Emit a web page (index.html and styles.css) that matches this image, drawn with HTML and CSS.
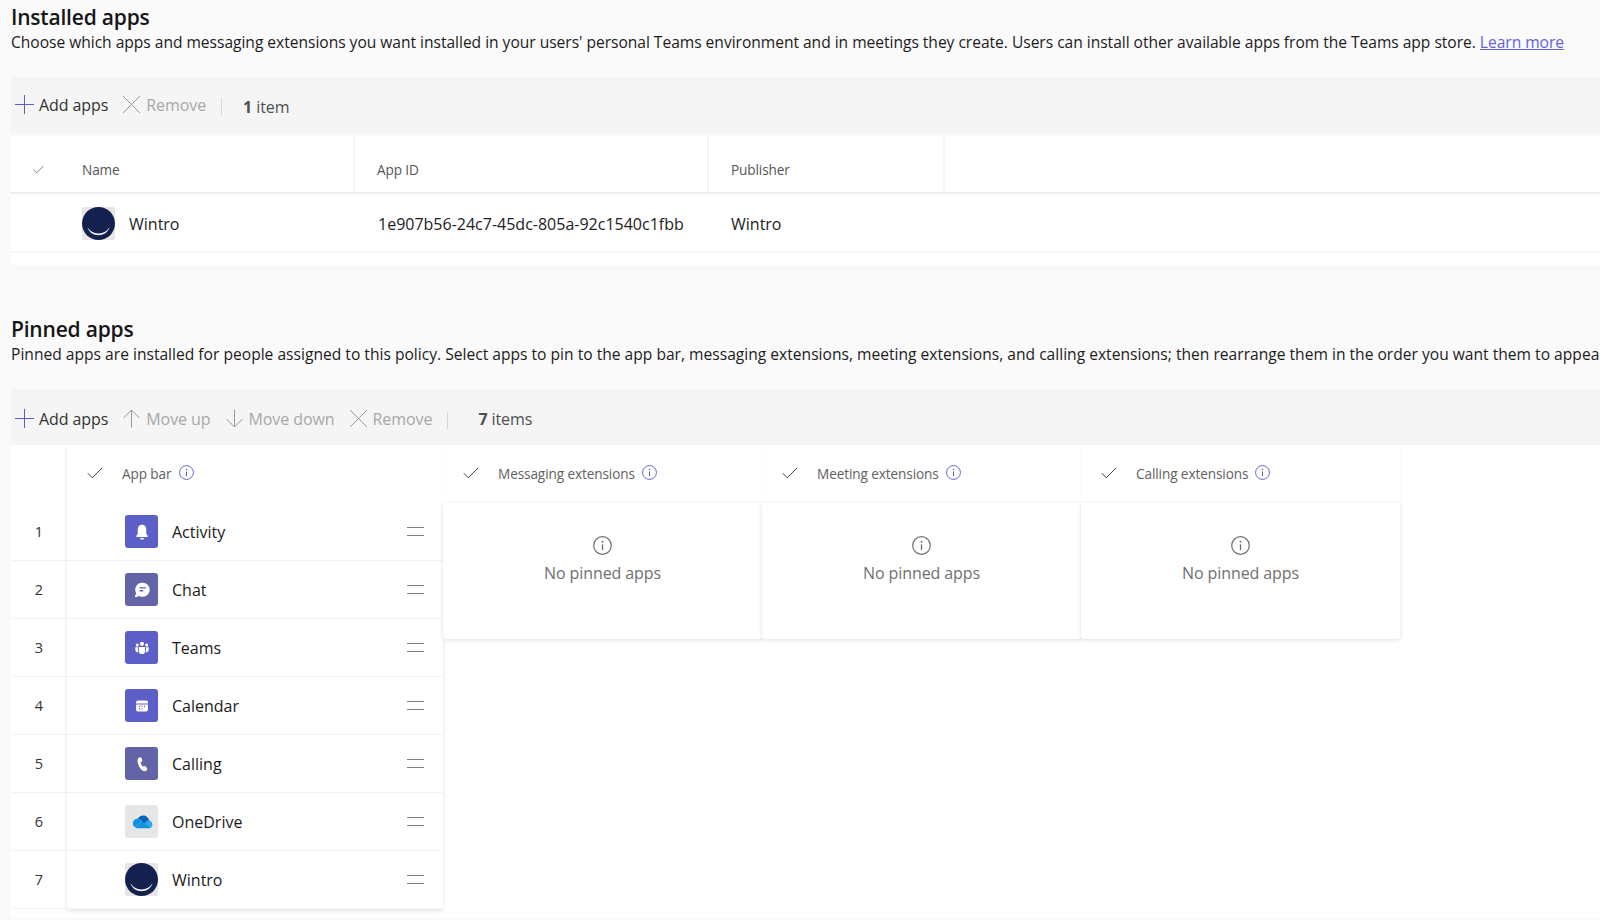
FILE: index.html
```html
<!DOCTYPE html>
<html lang="en">
<head>
<meta charset="utf-8">
<title>App setup policy</title>
<link rel="stylesheet" href="styles.css">
</head>
<body>
<svg class="defs" width="0" height="0" aria-hidden="true">
  <symbol id="i-plus" viewBox="0 0 19 19"><path d="M9.5 0V19M0 9.5H19" fill="none" stroke="#5b5fc7" stroke-width="1"/></symbol>
  <symbol id="i-x" viewBox="0 0 19 19"><path d="M1 1L18 18M18 1L1 18" fill="none" stroke="#9a9a9a" stroke-width="1"/></symbol>
  <symbol id="i-up" viewBox="0 0 19 19"><path d="M9.5 18.5V1M1.5 9L9.5 1L17.5 9" fill="none" stroke="#9a9a9a" stroke-width="1"/></symbol>
  <symbol id="i-down" viewBox="0 0 19 19"><path d="M9.5 .5V18M1.5 10L9.5 18L17.5 10" fill="none" stroke="#9a9a9a" stroke-width="1"/></symbol>
  <symbol id="i-check" viewBox="0 0 16 12"><path d="M.8 6.2L5.2 10.8L15.2 .8" fill="none" stroke="#444" stroke-width="1"/></symbol>
  <symbol id="i-info" viewBox="0 0 16 16"><circle cx="8" cy="8" r="7.4" fill="none" stroke="currentColor" stroke-width="1"/><circle cx="8" cy="4.9" r=".8" fill="currentColor"/><path d="M8 7V11.8" stroke="currentColor" stroke-width="1.1" fill="none"/></symbol>
  <symbol id="i-wintro" viewBox="0 0 33 33"><rect width="33" height="33" rx="2" fill="#e6e6e6"/><circle cx="16.5" cy="16.5" r="16.5" fill="#14214f"/><path d="M5.5 20C8 31 25 31 27.5 20C23 28.5 10 28.5 5.5 20Z" fill="#eeeef4"/></symbol>
</svg>

<main class="page">
  <section class="block">
    <h2 class="title">Installed apps</h2>
    <p class="desc">Choose which apps and messaging extensions you want installed in your users' personal Teams environment and in meetings they create. Users can install other available apps from the Teams app store. <a class="link" href="#">Learn more</a></p>
    <div class="toolbar toolbar-installed">
      <span class="tool tool-add"><svg class="ticon"><use href="#i-plus"/></svg>Add apps</span>
      <span class="tool tool-off"><svg class="ticon"><use href="#i-x"/></svg>Remove</span>
      <span class="sep"></span>
      <span class="count"><b>1</b> item</span>
    </div>
    <div class="table">
      <div class="thead">
        <div class="th th-name"><svg class="tcheck"><use href="#i-check"/></svg><span>Name</span></div>
        <div class="th th-id"><span>App ID</span></div>
        <div class="th th-pub"><span>Publisher</span></div>
      </div>
      <div class="trow">
        <div class="td td-name"><svg class="appicon"><use href="#i-wintro"/></svg><span>Wintro</span></div>
        <div class="td td-id">1e907b56-24c7-45dc-805a-92c1540c1fbb</div>
        <div class="td td-pub">Wintro</div>
      </div>
      <div class="tfoot"></div>
    </div>
  </section>

  <section class="block block-pinned">
    <h2 class="title">Pinned apps</h2>
    <p class="desc desc-pinned">Pinned apps are installed for people assigned to this policy. Select apps to pin to the app bar, messaging extensions, meeting extensions, and calling extensions; then rearrange them in the order you want them to appear in Teams.</p>
    <div class="toolbar toolbar-pinned">
      <span class="tool tool-add"><svg class="ticon"><use href="#i-plus"/></svg>Add apps</span>
      <span class="tool tool-off"><svg class="ticon"><use href="#i-up"/></svg>Move up</span>
      <span class="tool tool-off"><svg class="ticon"><use href="#i-down"/></svg>Move down</span>
      <span class="tool tool-off"><svg class="ticon"><use href="#i-x"/></svg>Remove</span>
      <span class="sep"></span>
      <span class="count count-wide"><b>7</b> items</span>
    </div>
    <div class="board">
      <div class="nums">
        <div class="num-head"></div>
        <div class="num">1</div><div class="num">2</div><div class="num">3</div><div class="num">4</div><div class="num">5</div><div class="num">6</div><div class="num">7</div>
      </div>
      <div class="appbar">
        <div class="colhead"><svg class="ccheck"><use href="#i-check"/></svg><span class="coltext">App bar</span><svg class="cinfo"><use href="#i-info"/></svg></div>
        <div class="app"><span class="tile tile-indigo"><svg viewBox="0 0 16 16"><path d="M8 2.2C5.6 2.2 4.6 4 4.6 6V9.3L3.4 11.2C3.2 11.6 3.4 11.9 3.8 11.9H12.2C12.6 11.9 12.8 11.6 12.6 11.2L11.4 9.3V6C11.4 4 10.4 2.2 8 2.2Z" fill="#fff"/><rect x="6.5" y="12.7" width="3" height="1.3" rx=".6" fill="#fff"/></svg></span><span class="appname">Activity</span><span class="grip"></span></div>
        <div class="app"><span class="tile tile-slate"><svg viewBox="0 0 16 16"><path d="M8.6 2.2A5.6 5.6 0 0 1 8.6 13.4C7.6 13.4 6.7 13.2 5.9 12.7L3 13.7C2.6 13.8 2.3 13.5 2.4 13.1L3.3 10.5A5.6 5.6 0 0 1 8.6 2.2Z" fill="#fff"/><path d="M6 6.3H11M6 8.6H9" stroke="#6264a7" stroke-width="1.1" fill="none"/></svg></span><span class="appname">Chat</span><span class="grip"></span></div>
        <div class="app"><span class="tile tile-indigo"><svg viewBox="-1 -1 18 18" fill="#fff"><circle cx="8" cy="4.2" r="1.9"/><circle cx="3.8" cy="5.4" r="1.4"/><circle cx="12.2" cy="5.4" r="1.4"/><path d="M5.2 7.2H10.8V10.6A2.8 2.8 0 0 1 5.2 10.6Z"/><path d="M2 7.4H4.4V10.8L4.8 12C3.2 12 2 11 2 9.6Z"/><path d="M14 7.4H11.6V10.8L11.2 12C12.8 12 14 11 14 9.6Z"/></svg></span><span class="appname">Teams</span><span class="grip"></span></div>
        <div class="app"><span class="tile tile-indigo"><svg viewBox="-2 -2 20 20"><path d="M4 2.4H12A2 2 0 0 1 14 4.4V5.6H2V4.4A2 2 0 0 1 4 2.4Z" fill="#fff"/><path d="M2 6.5H14V11.6A2 2 0 0 1 12 13.6H4A2 2 0 0 1 2 11.6Z" fill="#fff"/><path d="M5 8.3H6.1M7.5 8.3H8.6M10 8.3H11.1M5 10.8H6.1M7.5 10.8H8.6" stroke="#5b5fc7" stroke-width="1.2" fill="none"/></svg></span><span class="appname">Calendar</span><span class="grip"></span></div>
        <div class="app"><span class="tile tile-slate"><svg viewBox="-1 -1 18 18"><path d="M5.1 2.3L6.2 2C6.8 1.8 7.3 2.1 7.5 2.6L8.2 4.4C8.4 4.9 8.2 5.4 7.9 5.7L6.8 6.6C7 7.9 7.8 9.3 8.8 10.2L10.2 9.8C10.7 9.6 11.2 9.8 11.5 10.2L12.6 11.8C12.9 12.3 12.8 12.9 12.4 13.3L11.6 14C11 14.5 10.2 14.6 9.5 14.4C6.6 13.2 3.9 8.6 4 5C4 3.8 4.4 2.7 5.1 2.3Z" fill="#fff"/></svg></span><span class="appname">Calling</span><span class="grip"></span></div>
        <div class="app"><span class="tile tile-gray"><svg viewBox="0 0 20 20"><path d="M10.8 5C9 5 7.5 6 6.7 7.5C8 7.6 9.1 8.4 9.8 9.4L12 11.5L15.5 8.9C15.1 6.6 13.1 5 10.8 5Z" fill="#0364b8"/><path d="M6.7 7.5C4.6 7.5 3 9.1 3 11.1C3 12.3 3.6 13.4 4.6 14L9.8 9.4C9.1 8.2 8 7.5 6.7 7.5Z" fill="#0f8fe6"/><path d="M4.6 14C5.2 14.5 6 14.8 6.8 14.8H15.5C16.1 14.8 16.6 14.5 17 14.2L9.8 9.4Z" fill="#1490df"/><path d="M15.5 8.9C14.6 8.7 13.7 9 13 9.6L12 11.5L17 14.2C17.6 13.6 18 12.9 18 12C18 10.5 17 9.2 15.5 8.9Z" fill="#28a8ea"/></svg></span><span class="appname">OneDrive</span><span class="grip"></span></div>
        <div class="app"><svg class="appicon"><use href="#i-wintro"/></svg><span class="appname">Wintro</span><span class="grip"></span></div>
      </div>
      <div class="ext">
        <div class="colhead colhead-ext"><svg class="ccheck"><use href="#i-check"/></svg><span class="coltext">Messaging extensions</span><svg class="cinfo"><use href="#i-info"/></svg></div>
        <div class="empty"><svg class="einfo"><use href="#i-info"/></svg><span>No pinned apps</span></div>
      </div>
      <div class="ext">
        <div class="colhead colhead-ext"><svg class="ccheck"><use href="#i-check"/></svg><span class="coltext">Meeting extensions</span><svg class="cinfo"><use href="#i-info"/></svg></div>
        <div class="empty"><svg class="einfo"><use href="#i-info"/></svg><span>No pinned apps</span></div>
      </div>
      <div class="ext">
        <div class="colhead colhead-ext"><svg class="ccheck"><use href="#i-check"/></svg><span class="coltext">Calling extensions</span><svg class="cinfo"><use href="#i-info"/></svg></div>
        <div class="empty"><svg class="einfo"><use href="#i-info"/></svg><span>No pinned apps</span></div>
      </div>
    </div>
  </section>
</main>
</body>
</html>
```
FILE: styles.css
```css
* { box-sizing: border-box; }
html, body { margin: 0; height: 100%; overflow: hidden; }
body { background: #fafafa; color: #111; font-family: "Open Sans", "Liberation Sans", sans-serif; }
.defs { position: absolute; }
.page { padding: 5px 0 0 11px; width: 1600px; }
.title { margin: 0; font-size: 21px; line-height: 24px; font-weight: 600; letter-spacing: -.2px; color: #161616; }
.desc { margin: 2px 0 0; font-size: 15.6px; line-height: 22px; white-space: nowrap; overflow: hidden; letter-spacing: -.03px; color: #1c1c1c; }
.desc-pinned { letter-spacing: .005px; }
.link { color: #6264d8; }
.block-pinned { margin-top: 52px; }

.toolbar { display: flex; align-items: center; height: 57px; margin-top: 24px; background: #f5f5f5; padding-left: 4px; font-size: 16px; letter-spacing: -.08px; }
.toolbar-installed { padding-bottom: 2px; }
.toolbar-pinned { height: 56px; padding-top: 3px; }
.tool { display: flex; align-items: center; margin-right: 14px; }
.ticon { width: 19px; height: 19px; margin-right: 5px; }
.tool-add { color: #333; }
.tool-off { color: #a8a8a8; }
.sep { width: 1px; height: 17px; margin: 3px 0 0 1px; background: #d6d6d6; }
.count { margin: 5px 0 0 21px; color: #505050; }
.count b { font-weight: 700; }
.count-wide { margin-left: 30px; margin-top: 0; }

.table { margin-top: 2px; background: #fff; }
.thead { display: flex; height: 58px; border-bottom: 2px solid #eee; font-size: 13.6px; letter-spacing: -.1px; color: #555; }
.th { display: flex; align-items: center; padding-top: 10px; }
.th-name { width: 344px; border-right: 2px solid #f6f6f6; }
.th-id { width: 354px; padding-left: 22px; border-right: 2px solid #f6f6f6; }
.th-pub { width: 236px; padding-left: 22px; border-right: 2px solid #f6f6f6; }
.tcheck { width: 11px; height: 9px; margin: 0 38px 0 22px; }
.trow { display: flex; align-items: center; height: 59px; padding-top: 2px; border-bottom: 2px solid #f6f6f6; font-size: 16px; color: #222; }
.td-name { width: 344px; display: flex; align-items: center; padding-left: 71px; }
.td-name span { margin-left: 14px; font-weight: 500; }
.td-id { width: 354px; padding-left: 23px; }
.td-pub { padding-left: 22px; }
.appicon { width: 33px; height: 33px; flex: none; }
.tfoot { height: 12px; }

.board { display: flex; align-items: flex-start; height: 473px; background: #fff; }
.nums { width: 56px; flex: none; }
.num-head { height: 58px; }
.num { display: flex; align-items: center; justify-content: center; height: 58px; border-bottom: 1px solid #f3f3f3; font-size: 14.5px; color: #333; }
.appbar { width: 376px; flex: none; box-shadow: 0 2px 4px rgba(0,0,0,.11); border-radius: 0 0 3px 3px; background: #fff; }
.colhead { display: flex; align-items: center; height: 58px; padding: 0 0 2px 20px; font-size: 13.6px; letter-spacing: -.1px; color: #616161; }
.ccheck { width: 16px; height: 12px; margin-right: 19px; flex: none; }
.colhead-ext { box-shadow: 0 0 2px rgba(0,0,0,.05); }
.coltext { white-space: nowrap; }
.cinfo { width: 15px; height: 15px; margin: -2px 0 0 7px; color: #5b5fc7; flex: none; }
.app { display: flex; align-items: center; height: 58px; padding: 0 19px 0 58px; border-bottom: 1px solid #f3f3f3; font-size: 16px; }
.appname { margin-left: 14px; flex: 1; color: #1a1a1a; font-weight: 500; }
.tile { display: flex; align-items: center; justify-content: center; width: 33px; height: 33px; border-radius: 3px; flex: none; }
.tile svg { width: 20px; height: 20px; }
.tile-indigo { background: #5b5fc7; }
.tile-slate { background: #6264a7; }
.tile-gray { background: #e6e6e6; }
.tile-gray svg { width: 26px; height: 26px; }
.grip { width: 17px; height: 9px; border-top: 1px solid #808080; border-bottom: 1px solid #808080; margin-top: -1px; flex: none; }
.ext { width: 319px; flex: none; background: #fff; }
.empty { position: relative; display: flex; flex-direction: column; align-items: center; height: 136px; padding-top: 33px; border-radius: 0 0 3px 3px; box-shadow: 0 1px 4px rgba(0,0,0,.13); font-size: 16px; letter-spacing: -.1px; color: #707070; background: #fff; }
.einfo { width: 19px; height: 19px; color: #6e6e6e; margin-bottom: 7px; }
```
